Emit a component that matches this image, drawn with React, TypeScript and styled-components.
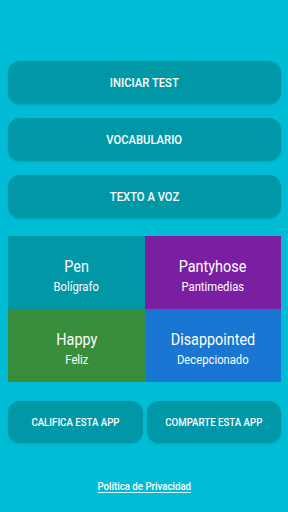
import styled, { createGlobalStyle } from 'styled-components';

const GlobalStyle = createGlobalStyle`
  html, body {
    margin: 0;
    padding: 0;
    background: #00bcd4;
    font-family: Roboto, "Noto Sans", sans-serif;
  }
`;

const Screen = styled.div`
  width: 288px;
  height: 512px;
  background: #00bcd4;
  box-sizing: border-box;
  padding: 61px 7px 0 8px;
  display: flex;
  flex-direction: column;
`;

// text in the reference is a little narrower than plain Roboto
const Label = styled.span<{ $squeeze?: number }>`
  display: inline-block;
  white-space: nowrap;
  transform: scaleX(${(p) => p.$squeeze ?? 0.9});
`;

const MenuButton = styled.button`
  height: 43px;
  margin-bottom: 14px;
  border: none;
  border-radius: 12px;
  background: #0097a7;
  color: #fff;
  font-family: Roboto, sans-serif;
  font-size: 12.5px;
  font-weight: 500;
  box-shadow: 0 1px 2px rgba(0, 0, 0, 0.12);
  cursor: pointer;
  padding: 0;
`;

const WordGrid = styled.div`
  margin-top: 4px;
  display: grid;
  grid-template-columns: 137px 136px;
  grid-template-rows: 73px 73px;
`;

const Tile = styled.div<{ $bg: string }>`
  background: ${(p) => p.$bg};
  color: #fff;
  display: flex;
  flex-direction: column;
  align-items: center;
  justify-content: center;
  padding-top: 6px;
  box-sizing: border-box;
`;

const Word = styled(Label)`
  font-size: 16px;
  line-height: 20px;
`;

const Translation = styled(Label)`
  font-size: 12.5px;
  line-height: 16px;
  margin-top: 2px;
`;

const BottomRow = styled.div`
  margin-top: 19px;
  display: grid;
  grid-template-columns: 1fr 1fr;
  gap: 4px;
`;

const SmallButton = styled(MenuButton)`
  height: 42px;
  margin-bottom: 0;
  font-size: 11.5px;
`;

const PrivacyLink = styled.a`
  align-self: center;
  margin-top: 37px;
  color: #fff;
  font-size: 11px;
  font-weight: 500;
  cursor: pointer;
`;

const LinkText = styled(Label)`
  text-decoration: underline;
  text-decoration-color: rgba(255, 255, 255, 0.85);
  text-underline-offset: 2px;
`;

const words = [
  { en: 'Pen', es: 'Bolígrafo', bg: '#0097a7' },
  { en: 'Pantyhose', es: 'Pantimedias', bg: '#7b1fa2' },
  { en: 'Happy', es: 'Feliz', bg: '#388e3c' },
  { en: 'Disappointed', es: 'Decepcionado', bg: '#1976d2' },
];

export default function App() {
  return (
    <>
      <GlobalStyle />
      <Screen>
        <MenuButton><Label>INICIAR TEST</Label></MenuButton>
        <MenuButton><Label>VOCABULARIO</Label></MenuButton>
        <MenuButton><Label>TEXTO A VOZ</Label></MenuButton>
        <WordGrid>
          {words.map((w) => (
            <Tile key={w.en} $bg={w.bg}>
              <Word>{w.en}</Word>
              <Translation>{w.es}</Translation>
            </Tile>
          ))}
        </WordGrid>
        <BottomRow>
          <SmallButton><Label $squeeze={0.84}>CALIFICA ESTA APP</Label></SmallButton>
          <SmallButton><Label $squeeze={0.84}>COMPARTE ESTA APP</Label></SmallButton>
        </BottomRow>
        <PrivacyLink><LinkText $squeeze={0.88}>Política de Privacidad</LinkText></PrivacyLink>
      </Screen>
    </>
  );
}
